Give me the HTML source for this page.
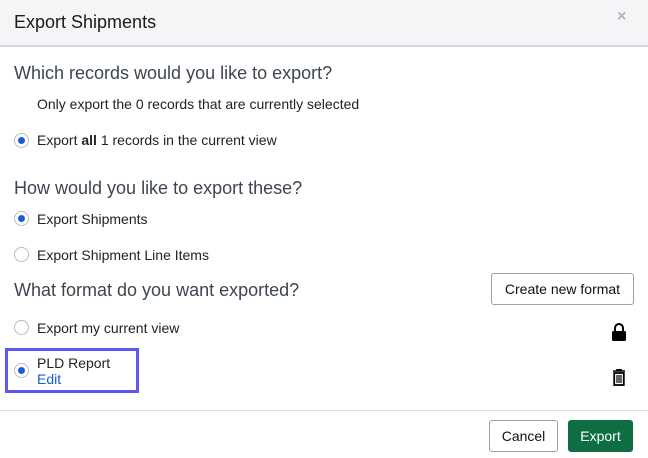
<!DOCTYPE html>
<html><head><style>
*{box-sizing:border-box;margin:0;padding:0}
body{width:648px;height:458px;background:#fff;font-family:"Liberation Sans",sans-serif;color:#222;position:relative;overflow:hidden}
.a{position:absolute;white-space:nowrap}
.hdr{left:0;top:0;width:648px;height:47px;background:#f4f5f7;border-bottom:2px solid #d5d7da}
h1{font-weight:normal;font-size:18px;color:#1a1a1a}
.h{font-size:18px;color:#3d4650}
.t{font-size:14px;color:#222}
.r{width:15px;height:15px;border:1px solid #b8bcc2;border-radius:50%;background:#fff}
.r.on::after{content:"";position:absolute;left:3px;top:3px;width:7px;height:7px;border-radius:50%;background:#1d5bd6}
.btn{border:1px solid #9aa0a6;border-radius:3px;background:#fff;font-size:14px;display:flex;align-items:center;justify-content:center;color:#111}
</style></head><body>
<div class="a hdr"></div>
<h1 class="a" style="left:14px;top:12px">Export Shipments</h1>
<div class="a" style="left:617px;top:8px;font-size:16px;color:#b0b4b9;font-weight:bold">×</div>
<div class="a h" style="left:14px;top:63px">Which records would you like to export?</div>
<div class="a t" style="left:37px;top:96px">Only export the 0 records that are currently selected</div>
<div class="a r on" style="left:14px;top:133px"></div>
<div class="a t" style="left:37px;top:132px">Export <b>all</b> 1 records in the current view</div>
<div class="a h" style="left:14px;top:178px">How would you like to export these?</div>
<div class="a r on" style="left:14px;top:211px"></div>
<div class="a t" style="left:37px;top:211px">Export Shipments</div>
<div class="a r" style="left:14px;top:247px"></div>
<div class="a t" style="left:37px;top:247px">Export Shipment Line Items</div>
<div class="a h" style="left:14px;top:280px">What format do you want exported?</div>
<div class="a btn" style="left:491px;top:273px;width:143px;height:32px">Create new format</div>
<div class="a r" style="left:14px;top:320px"></div>
<div class="a t" style="left:37px;top:320px">Export my current view</div>
<svg class="a" style="left:611px;top:323px" width="16" height="19" viewBox="0 0 16 19"><path d="M4 8V5a4 4 0 0 1 8 0v3" fill="none" stroke="#000" stroke-width="2"/><rect x="1" y="8" width="14" height="10" rx="1.5" fill="#000"/></svg>
<div class="a" style="left:5px;top:348px;width:134px;height:45px;border:3px solid #5b57f0"></div>
<div class="a r on" style="left:14px;top:363px"></div>
<div class="a t" style="left:37px;top:355px">PLD Report</div>
<div class="a t" style="left:37px;top:371px;color:#1d5bd6">Edit</div>
<svg class="a" style="left:612px;top:369px" width="14" height="17" viewBox="0 0 14 17"><path d="M1 2h12M5 2V0.8h4V2" fill="none" stroke="#000" stroke-width="1.6"/><rect x="2.2" y="4" width="9.6" height="12" fill="none" stroke="#000" stroke-width="1.8"/><path d="M5 6v8M7 6v8M9 6v8" stroke="#000" stroke-width="1.2"/></svg>
<div class="a" style="left:0;top:410px;width:648px;height:1px;background:#dcdee1"></div>
<div class="a btn" style="left:489px;top:420px;width:69px;height:32px">Cancel</div>
<div class="a btn" style="left:568px;top:420px;width:65px;height:32px;background:#0f6e41;border-color:#0f6e41;color:#fff">Export</div>
</body></html>
